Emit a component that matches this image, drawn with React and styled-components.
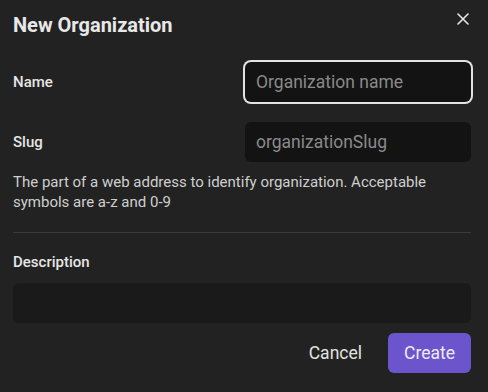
import React from "react";
import styled, { createGlobalStyle } from "styled-components";

const GlobalStyle = createGlobalStyle`
  html, body {
    margin: 0;
    padding: 0;
    background: #222222;
  }
  body {
    font-family: Roboto, "Liberation Sans", sans-serif;
  }
`;

function App() {
  return (
    <>
      <GlobalStyle />
      <Dialog>
        <Header>
          <Title>New Organization</Title>
          <CloseButton aria-label="Close">
            <svg width="12" height="12" viewBox="0 0 12 12">
              <path d="M1 1 L11 11 M11 1 L1 11" stroke="#e6e6e6" strokeWidth="1.6" strokeLinecap="round" />
            </svg>
          </CloseButton>
        </Header>

        <FieldRow $top={25}>
          <Label>Name</Label>
          <TextInput $focused placeholder="Organization name" />
        </FieldRow>

        <FieldRow $top={20}>
          <Label>Slug</Label>
          <TextInput placeholder="organizationSlug" />
        </FieldRow>

        <HelpText>
          The part of a web address to identify organization. Acceptable symbols are a-z and 0-9
        </HelpText>

        <Divider />

        <Label>Description</Label>
        <DescriptionInput />

        <Actions>
          <CancelButton>Cancel</CancelButton>
          <CreateButton>Create</CreateButton>
        </Actions>
      </Dialog>
    </>
  );
}

const Dialog = styled.div`
  width: 488px;
  height: 392px;
  box-sizing: border-box;
  padding: 13px 17px 19px 13px;
  display: flex;
  flex-direction: column;
  background: #222222;
  color: #e6e6e6;
`;

const Header = styled.div`
  display: flex;
  justify-content: space-between;
  align-items: flex-start;
  height: 24px;
`;

const Title = styled.h2`
  margin: 0;
  font-size: 20px;
  line-height: 24px;
  font-weight: 700;
  color: #e8e8e8;
`;

const CloseButton = styled.button`
  border: 0;
  background: none;
  padding: 0;
  margin: -1px 1px 0 0;
  width: 14px;
  height: 14px;
  display: flex;
  align-items: center;
  justify-content: center;
  cursor: pointer;
`;

const FieldRow = styled.div`
  display: flex;
  justify-content: space-between;
  align-items: center;
  margin-top: ${(p) => p.$top}px;
`;

const Label = styled.label`
  font-size: 15px;
  line-height: 20px;
  font-weight: 500;
  color: #e6e6e6;
`;

const TextInput = styled.input`
  width: 226px;
  height: 40px;
  box-sizing: border-box;
  padding: 0 11px;
  border: 0;
  border-radius: 6px;
  background: #131313;
  color: #e6e6e6;
  font-family: inherit;
  font-size: 17.5px;
  outline: none;
  box-shadow: ${(p) => (p.$focused ? "0 0 0 2px #e2e2e2" : "none")};
  &::placeholder {
    color: #8a8a8a;
  }
`;

const HelpText = styled.p`
  margin: 10px 0 0;
  font-size: 15px;
  line-height: 20px;
  color: #cfcfcf;
  max-width: 450px;
`;

const Divider = styled.hr`
  margin: 20px 0 19px;
  border: 0;
  height: 1px;
  background: #3a3a3a;
`;

const DescriptionInput = styled.textarea`
  margin-top: 11px;
  height: 40px;
  box-sizing: border-box;
  border: 0;
  border-radius: 6px;
  background: #1a1a1a;
  resize: none;
  outline: none;
  padding: 10px 11px;
  color: #e6e6e6;
  font-family: inherit;
  font-size: 15px;
`;

const Actions = styled.div`
  margin-top: 10px;
  display: flex;
  justify-content: flex-end;
  align-items: center;
  gap: 13px;
`;

const BaseButton = styled.button`
  height: 40px;
  border: 0;
  border-radius: 6px;
  font-family: inherit;
  font-size: 17.5px;
  font-weight: 400;
  cursor: pointer;
`;

const CancelButton = styled(BaseButton)`
  background: transparent;
  color: #e2e2e2;
  padding: 0 13px;
`;

const CreateButton = styled(BaseButton)`
  background: #6c55cc;
  color: #ecebf5;
  padding: 0 16px;
  width: 83px;
`;

export default App;
